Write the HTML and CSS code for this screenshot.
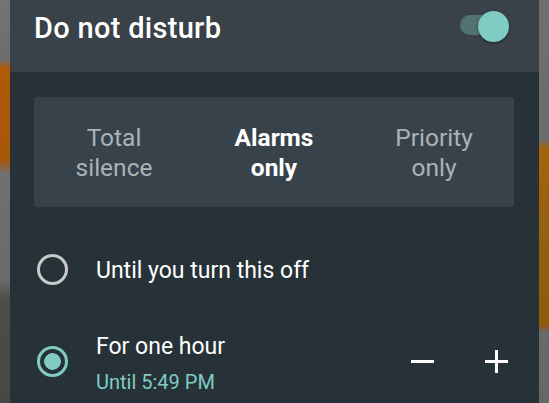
FILE: index.html
```html
<!DOCTYPE html>
<html lang="en">
<head>
    <meta charset="UTF-8">
    <meta name="viewport" content="width=device-width, initial-scale=1.0">
    <title>Do not disturb</title>
    <link rel="stylesheet" href="styles.css">
</head>
<body>

    <div class="edge edge-left"></div>

    <div class="panel">
        <div class="panel-header">
            <h1>Do not disturb</h1>
            <div class="toggle on">
                <span class="toggle-track"></span>
                <span class="toggle-thumb"></span>
            </div>
        </div>

        <div class="panel-body">
            <div class="modes">
                <div class="mode">Total<br>silence</div>
                <div class="mode active">Alarms<br>only</div>
                <div class="mode">Priority<br>only</div>
            </div>

            <div class="option option-first">
                <span class="radio"></span>
                <div class="option-text">Until you turn this off</div>
            </div>

            <div class="option">
                <span class="radio checked"></span>
                <div class="option-text">
                    <span class="option-main">For one hour</span>
                    <span class="option-sub">Until 5:49 PM</span>
                </div>
                <div class="stepper">
                    <span class="step minus"></span>
                    <span class="step plus"></span>
                </div>
            </div>
        </div>
    </div>

    <div class="edge edge-right"></div>

</body>
</html>
```

FILE: styles.css
```css
* { margin: 0; padding: 0; box-sizing: border-box; font-family: Roboto, "Noto Sans", sans-serif; }

body {
    height: 403px;
    display: flex;
    overflow: hidden;
    background: #6b6b6b;
}

/* --- WALLPAPER PEEKING OUT AT THE SIDES --- */
.edge { height: 100%; }

.edge-left {
    width: 10px;
    background:
        linear-gradient(180deg, #747474 0, #6d6d6d 60px, #b05a06 68px, #a85608 160px, #707070 174px, #6a6a6a 280px, #4e4c4a 300px, #4a4846 100%);
}

.edge-right {
    width: 10px;
    background:
        linear-gradient(180deg, #6f6f6f 0, #6c6c6c 140px, #a4630c 148px, #946010 240px, #8f5a0a 325px, #6a6a6a 332px, #666 100%);
}

/* --- THE DIALOG --- */
.panel {
    flex: 1;
    display: flex;
    flex-direction: column;
    overflow: hidden;
    background: #263238;
}

.panel-header {
    flex: none;
    height: 72px;
    display: flex;
    align-items: flex-start;
    justify-content: space-between;
    padding: 11px 30px 0 24px;
    background: #394149;
}

h1 {
    font-size: 29px;
    line-height: 34px;
    font-weight: 500;
    letter-spacing: 0.3px;
    color: #fff;
}

.toggle {
    position: relative;
    width: 49px;
    height: 32px;
}

.toggle-track {
    position: absolute;
    left: 0; top: 4px;
    width: 44px; height: 20px;
    border-radius: 10px;
    background: #527270;
}

.toggle-thumb {
    position: absolute;
    right: 0; top: 0;
    width: 31px; height: 31px;
    border-radius: 50%;
    background: #80cbc4;
    box-shadow: 0 1px 3px rgba(0,0,0,0.5);
}

.panel-body {
    flex: none;
    padding: 25px 25px 0 24px;
}

/* segmented mode picker */
.modes {
    display: grid;
    grid-template-columns: repeat(3, 1fr);
    align-items: center;
    height: 110px;
    border-radius: 3px;
    background: #37424a;
}

.mode {
    text-align: center;
    font-size: 24.5px;
    line-height: 30px;
    padding-top: 2px;
    color: #a9b3b8;
}

.mode.active { color: #fff; font-weight: 700; }

/* duration options */
.option {
    display: flex;
    align-items: center;
    gap: 28px;
    height: 92px;
    padding-left: 3px;
}

.option-first { margin-top: 16px; }
.option-first .option-text { padding-top: 4px; }

.radio {
    flex: none;
    width: 31px; height: 31px;
    border-radius: 50%;
    border: 3px solid #c9c9c9;
}

.radio.checked {
    border-color: #80cbc4;
    background: radial-gradient(circle, #80cbc4 0, #80cbc4 8px, transparent 8.6px);
}

.option-text {
    flex: 1;
    font-size: 23px;
    line-height: 28px;
    color: #fff;
}

.option-main { display: block; padding-top: 4px; }

.option-sub {
    display: block;
    margin-top: 9px;
    font-size: 20px;
    line-height: 24px;
    color: #80cbc4;
}

.stepper {
    display: flex;
    gap: 51px;
    margin-right: 6px;
}

.step {
    position: relative;
    width: 23px; height: 23px;
}

.step::before, .plus::after {
    content: "";
    position: absolute;
    background: #fff;
}

.step::before { left: 0; top: 10px; width: 23px; height: 3.5px; }
.plus::after { left: 9.75px; top: 0; width: 3.5px; height: 23px; }
```
